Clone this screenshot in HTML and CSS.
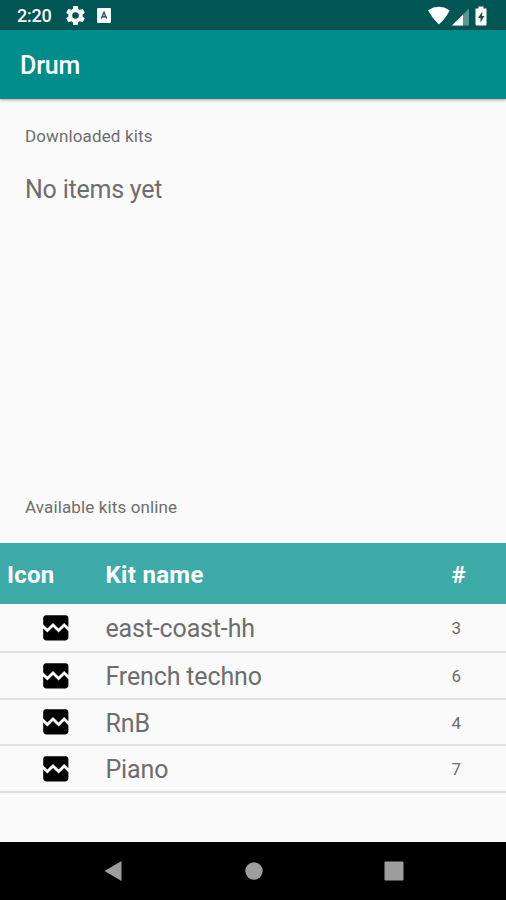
FILE: index.html
```html
<!DOCTYPE html>
<html lang="en">
<head>
<meta charset="utf-8">
<title>Drum</title>
<link rel="stylesheet" href="styles.css">
</head>
<body>
<svg width="0" height="0" class="defs">
  <symbol id="kit" viewBox="0 0 24 24"><path d="M21 5v6.59l-3-3.01-4 4.01-4-4-4 4-3-3.01V5c0-1.1.9-2 2-2h14c1.1 0 2 .9 2 2zm-3 6.42l3 3.01V19c0 1.1-.9 2-2 2H5c-1.1 0-2-.9-2-2v-6.58l3 2.99 4-4 4 4 4-3.99z"/></symbol>
</svg>
<div class="screen">
  <div class="status">
    <span class="time">2:20</span>
    <svg class="gear" viewBox="2 2 20 20"><path fill="#fff" d="M19.43 12.98c.04-.32.07-.64.07-.98s-.03-.66-.07-.98l2.11-1.65c.19-.15.24-.42.12-.64l-2-3.46c-.12-.22-.39-.3-.61-.22l-2.49 1c-.52-.4-1.08-.73-1.69-.98l-.38-2.65C14.46 2.18 14.25 2 14 2h-4c-.25 0-.46.18-.49.42l-.38 2.65c-.61.25-1.17.59-1.69.98l-2.49-1c-.23-.09-.49 0-.61.22l-2 3.46c-.13.22-.07.49.12.64l2.11 1.65c-.04.32-.07.65-.07.98s.03.66.07.98l-2.11 1.65c-.19.15-.24.42-.12.64l2 3.46c.12.22.39.3.61.22l2.49-1c.52.4 1.08.73 1.69.98l.38 2.65c.03.24.24.42.49.42h4c.25 0 .46-.18.49-.42l.38-2.65c.61-.25 1.17-.59 1.69-.98l2.49 1c.23.09.49 0 .61-.22l2-3.46c.12-.22.07-.49-.12-.64l-2.11-1.65zM12 15.500a3.500 3.500 0 1 1 0-7 3.500 3.500 0 0 1 0 7z"/></svg>
    <svg class="app" viewBox="0 0 14 15"><rect width="14" height="15" rx="1.200" fill="#fff"/><path d="M4.300 10.500L7 4.300l2.700 6.200M5.300 8.800h3.400" fill="none" stroke="#205d5c" stroke-width="1.500"/></svg>
    <svg class="signals" viewBox="0 0 62 22">
      <path fill="#fff" d="M0 4.200Q10.700-2.500 21.700 4.200Q18 12 10.900 18.500Q4 12 0 4.200z"/>
      <path fill="#5b9492" d="M24 19.500L41 2.500v17z"/>
      <path fill="#fff" d="M24 19.500L35 8.500V19.500z"/>
      <path fill="#fff" d="M47.500 2.500h3V.5h5v2h3v15.500q0 1.500-1.500 1.500h-8q-1.500 0-1.500-1.500z"/>
      <path fill="#174f4e" d="M54.300 5.500L50 12h2.500v4.500L56.500 10h-2.400z"/>
    </svg>
  </div>
  <header class="appbar">Drum</header>
  <main>
    <section class="downloaded">
      <h2>Downloaded kits</h2>
      <p>No items yet</p>
    </section>
    <section class="online">
      <h2>Available kits online</h2>
      <div class="row head"><span>Icon</span><span class="name">Kit name</span><span class="num">#</span></div>
      <div class="row"><svg class="kit"><use href="#kit"/></svg><span class="name">east-coast-hh</span><span class="num">3</span></div>
      <div class="row"><svg class="kit"><use href="#kit"/></svg><span class="name">French techno</span><span class="num">6</span></div>
      <div class="row"><svg class="kit"><use href="#kit"/></svg><span class="name">RnB</span><span class="num">4</span></div>
      <div class="row"><svg class="kit"><use href="#kit"/></svg><span class="name">Piano</span><span class="num">7</span></div>
    </section>
  </main>
  <nav class="navbar">
    <svg viewBox="0 0 20 22"><path d="M.5 11L17.500 1v20z"/></svg>
    <svg viewBox="0 0 20 22"><circle cx="10" cy="11" r="8.700"/></svg>
    <svg viewBox="0 0 20 22"><rect x=".5" y="1.500" width="19" height="19" rx="1"/></svg>
  </nav>
</div>
</body>
</html>
```
FILE: styles.css
```css
* { box-sizing: border-box; }
body { margin: 0; font-family: Roboto, sans-serif; color: #6d6d6d; }
.defs { position: absolute; }
.screen { width: 506px; height: 900px; display: flex; flex-direction: column; background: #fafafa; overflow: hidden; }
.status { height: 30px; flex: none; background: #005555; display: flex; align-items: center; padding: 0 16px 0 17px; color: #fff; }
.time { width: 49px; font-size: 18px; font-weight: 500; line-height: 30px; padding-top: 2px; letter-spacing: -.2px; }
.gear { width: 19px; height: 19px; }
.app { width: 14px; height: 15px; margin-left: 12px; }
.signals { width: 62px; height: 22px; margin: 3px 0 0 auto; }
.appbar { height: 69px; flex: none; background: #008c8b; color: #fff; font-size: 25px; font-weight: 500; line-height: 71px; padding-left: 20px; letter-spacing: -.15px; box-shadow: 0 1px 3px rgba(60, 20, 20, .4); z-index: 1; }
main { flex: 1; display: flex; flex-direction: column; }
h2 { margin: 0; font-size: 17px; font-weight: 400; line-height: 20px; padding-left: 25px; letter-spacing: .13px; }
.downloaded { height: 371px; padding-top: 27px; }
.downloaded p { margin: 28px 0 0; padding-left: 25px; font-size: 25px; line-height: 32px; letter-spacing: -.22px; }
.online { padding-top: 27px; }
.online h2 { margin-bottom: 26px; }
.row { display: grid; grid-template-columns: 98.500px 346px 1fr; align-items: center; height: 47px; padding-left: 7px; border-bottom: 2px solid #e0e0e0; font-size: 25px; line-height: 30px; }
.row:nth-of-type(4) { height: 46px; }
.name { padding-top: 3px; letter-spacing: -.15px; }
.row .num { font-size: 17px; padding-top: 1px; }
.row.head { height: 61px; border: 0; background: #3daaa8; color: #fff; font-weight: 700; font-size: 24px; padding-top: 3px; letter-spacing: .25px; }
.head .name { padding-top: 0; letter-spacing: .3px; }
.head .num { font-size: 24px; padding-top: 0; }
.head + .row { height: 49px; }
.kit { width: 33.600px; height: 33.600px; margin-left: 32.400px; }
.navbar { height: 58px; flex: none; background: #000; display: flex; justify-content: center; align-items: center; gap: 120px; padding-left: 1px; }
.navbar svg { width: 20px; height: 22px; fill: #9e9e9e; }
```
